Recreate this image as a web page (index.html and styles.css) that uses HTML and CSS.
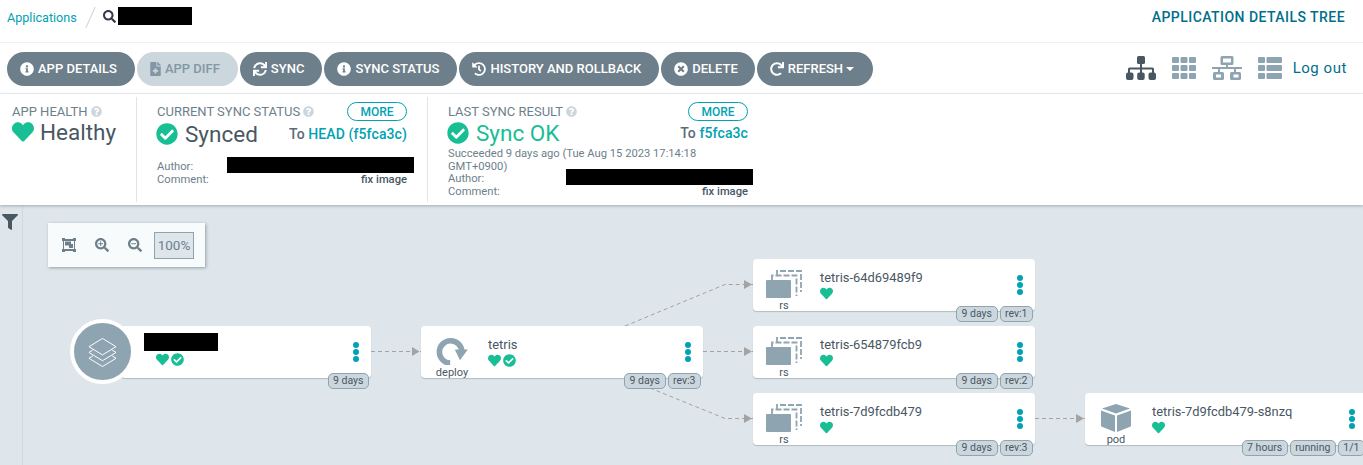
FILE: index.html
```html
<!DOCTYPE html>
<html lang="en">
<head>
  <meta charset="UTF-8">
  <meta name="viewport" content="width=device-width, initial-scale=1.0">
  <title>Application Details Tree</title>
  <link rel="stylesheet" href="styles.css">
</head>
<body>

  <svg class="sprite" xmlns="http://www.w3.org/2000/svg">
    <symbol id="i-info" viewBox="0 0 512 512"><path d="M256 8C119.043 8 8 119.083 8 256c0 136.997 111.043 248 248 248s248-111.003 248-248C504 119.083 392.957 8 256 8zm0 110c23.196 0 42 18.804 42 42s-18.804 42-42 42-42-18.804-42-42 18.804-42 42-42zm56 254c0 6.627-5.373 12-12 12h-88c-6.627 0-12-5.373-12-12v-24c0-6.627 5.373-12 12-12h12v-64h-12c-6.627 0-12-5.373-12-12v-24c0-6.627 5.373-12 12-12h64c6.627 0 12 5.373 12 12v100h12c6.627 0 12 5.373 12 12v24z"/></symbol>
    <symbol id="i-check" viewBox="0 0 512 512"><path d="M504 256c0 136.967-111.033 248-248 248S8 392.967 8 256 119.033 8 256 8s248 111.033 248 248zM227.314 387.314l184-184c6.248-6.248 6.248-16.379 0-22.627l-22.627-22.627c-6.248-6.249-16.379-6.249-22.628 0L216 308.118l-70.059-70.059c-6.248-6.248-16.379-6.248-22.628 0l-22.627 22.627c-6.248 6.248-6.248 16.379 0 22.627l104 104c6.249 6.249 16.379 6.249 22.628.001z"/></symbol>
    <symbol id="i-heart" viewBox="0 0 512 512"><path d="M462.3 62.6C407.5 15.9 326 24.3 275.7 76.2L256 96.5l-19.7-20.3C186.1 24.3 104.5 15.9 49.7 62.6c-62.8 53.6-66.1 149.8-9.9 207.9l193.5 199.8c12.5 12.9 32.8 12.9 45.3 0l193.5-199.8c56.3-58.1 53-154.3-9.8-207.9z"/></symbol>
    <symbol id="i-search" viewBox="0 0 512 512"><path d="M505 442.7L405.3 343c-4.5-4.5-10.6-7-17-7H372c27.6-35.3 44-79.7 44-128C416 93.1 322.9 0 208 0S0 93.1 0 208s93.1 208 208 208c48.3 0 92.7-16.4 128-44v16.3c0 6.4 2.5 12.5 7 17l99.7 99.7c9.4 9.4 24.6 9.4 33.9 0l28.3-28.3c9.4-9.4 9.4-24.6.1-34zM208 336c-70.7 0-128-57.2-128-128 0-70.7 57.2-128 128-128 70.7 0 128 57.2 128 128 0 70.7-57.2 128-128 128z"/></symbol>
    <symbol id="i-sync" viewBox="0 0 512 512"><path d="M440.65 12.57l4 82.77A247.16 247.16 0 0 0 255.83 8C134.73 8 33.91 94.92 12.29 209.82A12 12 0 0 0 24.09 224h49.05a12 12 0 0 0 11.67-9.26 175.91 175.91 0 0 1 317-56.94l-101.46-4.86a12 12 0 0 0-12.57 12v47.41a12 12 0 0 0 12 12H500a12 12 0 0 0 12-12V12a12 12 0 0 0-12-12h-47.37a12 12 0 0 0-11.98 12.57zM255.83 432a175.61 175.61 0 0 1-146-77.8l101.8 4.87a12 12 0 0 0 12.57-12v-47.4a12 12 0 0 0-12-12H12a12 12 0 0 0-12 12V500a12 12 0 0 0 12 12h47.35a12 12 0 0 0 12-12.6l-4.15-82.57A247.17 247.17 0 0 0 255.83 504c121.11 0 221.93-86.92 243.55-201.82a12 12 0 0 0-11.8-14.18h-49.05a12 12 0 0 0-11.67 9.26A175.86 175.86 0 0 1 255.83 432z"/></symbol>
    <symbol id="i-redo" viewBox="0 0 512 512"><path d="M500.33 0h-47.41a12 12 0 0 0-12 12.57l4 82.76A247.42 247.42 0 0 0 256 8C119.34 8 7.9 119.53 8 256.19 8.1 393.07 119.1 504 256 504a247.1 247.1 0 0 0 166.18-63.91 12 12 0 0 0 .48-17.43l-34-34a12 12 0 0 0-16.38-.55A176 176 0 1 1 402.1 157.8l-101.53-4.87a12 12 0 0 0-12.57 12v47.41a12 12 0 0 0 12 12h200.33a12 12 0 0 0 12-12V12a12 12 0 0 0-12-12z"/></symbol>
    <symbol id="i-history" viewBox="0 0 512 512"><path d="M504 255.531c.253 136.64-111.18 248.372-247.82 248.468-59.015.042-113.223-20.53-155.822-54.911-11.077-8.94-11.905-25.541-1.839-35.607l11.267-11.267c8.609-8.609 22.353-9.551 31.891-1.984C173.062 425.135 212.781 440 256 440c101.705 0 184-82.311 184-184 0-101.705-82.311-184-184-184-48.814 0-93.149 18.969-126.068 49.932l50.754 50.754c10.08 10.08 2.941 27.314-11.313 27.314H24c-8.837 0-16-7.163-16-16V38.627c0-14.254 17.234-21.393 27.314-11.314l49.372 49.372C129.209 34.136 189.552 8 256 8c136.81 0 247.747 110.78 248 247.531zm-180.912 78.784l9.823-12.63c8.138-10.463 6.253-25.542-4.21-33.679L288 256.349V152c0-13.255-10.745-24-24-24h-16c-13.255 0-24 10.745-24 24v135.651l65.409 50.874c10.463 8.137 25.541 6.253 33.679-4.21z"/></symbol>
    <symbol id="i-times" viewBox="0 0 512 512"><path d="M256 8C119 8 8 119 8 256s111 248 248 248 248-111 248-248S393 8 256 8zm121.6 313.1c4.7 4.7 4.7 12.3 0 17L338 377.6c-4.7 4.7-12.3 4.7-17 0L256 312l-65.1 65.6c-4.7 4.7-12.3 4.7-17 0L134.4 338c-4.7-4.7-4.7-12.3 0-17l65.6-65-65.6-65.1c-4.7-4.7-4.7-12.3 0-17l39.6-39.6c4.7-4.7 12.3-4.7 17 0l65 65.7 65.1-65.6c4.7-4.7 12.3-4.7 17 0l39.6 39.6c4.7 4.7 4.7 12.3 0 17L312 256l65.6 65.1z"/></symbol>
    <symbol id="i-question" viewBox="0 0 512 512"><path d="M504 256c0 136.997-111.043 248-248 248S8 392.997 8 256C8 119.083 119.043 8 256 8s248 111.083 248 248zM262.655 90c-54.497 0-89.255 22.957-116.549 63.758-3.536 5.286-2.353 12.415 2.715 16.258l34.699 26.31c5.205 3.947 12.621 3.008 16.665-2.122 17.864-22.658 30.113-35.797 57.303-35.797 20.429 0 45.698 13.148 45.698 32.958 0 14.976-12.363 22.667-32.534 33.976C247.128 238.528 216 254.941 216 296v4c0 6.627 5.373 12 12 12h56c6.627 0 12-5.373 12-12v-1.333c0-28.462 83.186-29.647 83.186-106.667 0-58.002-60.165-102-116.531-102zM256 338c-25.365 0-46 20.635-46 46 0 25.364 20.635 46 46 46s46-20.636 46-46c0-25.365-20.635-46-46-46z"/></symbol>
    <symbol id="i-filter" viewBox="0 0 512 512"><path d="M487.976 0H24.028C2.71 0-8.047 25.866 7.058 40.971L192 225.941V432c0 7.831 3.821 15.17 10.237 19.662l80 55.98C298.02 518.69 320 507.493 320 487.98V225.941l184.947-184.97C520.021 25.896 509.338 0 487.976 0z"/></symbol>
    <symbol id="i-file" viewBox="0 0 384 512"><path d="M377 105L279.1 7c-4.5-4.5-10.6-7-17-7H256v128h128v-6.1c0-6.3-2.5-12.4-7-16.9zm-153 31V0H24C10.7 0 0 10.7 0 24v464c0 13.3 10.7 24 24 24h336c13.3 0 24-10.7 24-24V160H248c-13.2 0-24-10.8-24-24zm64 160v48c0 4.4-3.6 8-8 8h-56v56c0 4.4-3.6 8-8 8h-48c-4.4 0-8-3.6-8-8v-56h-56c-4.4 0-8-3.6-8-8v-48c0-4.4 3.6-8 8-8h56v-56c0-4.4 3.6-8 8-8h48c4.4 0 8 3.6 8 8v56h56c4.4 0 8 3.6 8 8z"/></symbol>
    <symbol id="i-tree" viewBox="0 0 30 24"><rect x="11" y="0" width="8" height="8" rx="1.5"/><path d="M14 8h2v3.5h10.5a1.5 1.5 0 0 1 1.5 1.5v4h-2v-3.5H16V17h-2v-3.5H4V17H2v-4a1.5 1.5 0 0 1 1.5-1.5H14z"/><rect x="0" y="16.5" width="7.5" height="7.5" rx="2"/><rect x="11.2" y="16.5" width="7.5" height="7.5" rx="2"/><rect x="22.5" y="16.5" width="7.5" height="7.5" rx="2"/></symbol>
    <symbol id="i-grid" viewBox="0 0 24 22"><rect x="0" y="0" width="7" height="6" rx="1"/><rect x="8.5" y="0" width="7" height="6" rx="1"/><rect x="17" y="0" width="7" height="6" rx="1"/><rect x="0" y="8" width="7" height="6" rx="1"/><rect x="8.5" y="8" width="7" height="6" rx="1"/><rect x="17" y="8" width="7" height="6" rx="1"/><rect x="0" y="16" width="7" height="6" rx="1"/><rect x="8.5" y="16" width="7" height="6" rx="1"/><rect x="17" y="16" width="7" height="6" rx="1"/></symbol>
    <symbol id="i-network" viewBox="0 0 30 24"><path fill-rule="evenodd" d="M10 0h10a1.5 1.5 0 0 1 1.5 1.500v6A1.500 1.500 0 0 1 20 9h-4v2h14v2h-6v3h3.500A1.500 1.500 0 0 1 29 17.500v5a1.500 1.500 0 0 1-1.500 1.500h-8a1.500 1.500 0 0 1-1.500-1.500v-5a1.500 1.500 0 0 1 1.500-1.500H22v-3H8v3h2.500a1.500 1.500 0 0 1 1.500 1.500v5a1.500 1.500 0 0 1-1.500 1.500h-8A1.500 1.500 0 0 1 1 22.500v-5A1.500 1.500 0 0 1 2.500 16H6v-3H0v-2h14V9h-4a1.500 1.500 0 0 1-1.500-1.500v-6A1.500 1.500 0 0 1 10 0zm1 2.500v4h8v-4zM4 18.500v3h5v-3zm17.500 0v3h5v-3z"/></symbol>
    <symbol id="i-list" viewBox="0 0 24 22"><rect x="0" y="0" width="7" height="6" rx="1"/><rect x="8.500" y="0" width="15.500" height="6" rx="1"/><rect x="0" y="8" width="7" height="6" rx="1"/><rect x="8.500" y="8" width="15.500" height="6" rx="1"/><rect x="0" y="16" width="7" height="6" rx="1"/><rect x="8.500" y="16" width="15.500" height="6" rx="1"/></symbol>
    <symbol id="i-rs" viewBox="0 0 36 29"><g fill="none" stroke-width="1.800" stroke-dasharray="6 2"><path d="M11 7V2H35V23"/><path d="M6 11V6.500H30.500V27"/></g><rect class="rs-front" x="0" y="11" width="25" height="18" rx="1"/></symbol>
  </svg>

  <header class="top-bar">
    <a class="crumb" href="#">Applications</a>
    <span class="crumb-slash"></span>
    <svg class="icon search-icon"><use href="#i-search"/></svg>
    <span class="redacted redacted-title"></span>
    <span class="page-title">APPLICATION DETAILS TREE</span>
  </header>

  <nav class="toolbar">
    <button class="pill"><svg class="icon"><use href="#i-info"/></svg>APP DETAILS</button>
    <button class="pill disabled"><svg class="icon file-icon"><use href="#i-file"/></svg>APP DIFF</button>
    <button class="pill"><svg class="icon"><use href="#i-sync"/></svg>SYNC</button>
    <button class="pill"><svg class="icon"><use href="#i-info"/></svg>SYNC STATUS</button>
    <button class="pill"><svg class="icon"><use href="#i-history"/></svg>HISTORY AND ROLLBACK</button>
    <button class="pill pill-delete"><svg class="icon"><use href="#i-times"/></svg>DELETE</button>
    <button class="pill pill-refresh"><svg class="icon"><use href="#i-redo"/></svg>REFRESH<span class="caret"></span></button>
    <div class="view-switch">
      <svg class="view view-active"><use href="#i-tree"/></svg>
      <svg class="view view-small"><use href="#i-grid"/></svg>
      <svg class="view"><use href="#i-network"/></svg>
      <svg class="view view-small"><use href="#i-list"/></svg>
      <a class="logout" href="#">Log out</a>
    </div>
  </nav>

  <section class="status">
    <div class="panel panel-health">
      <div class="panel-title">APP HEALTH <svg class="icon help"><use href="#i-question"/></svg></div>
      <div class="health-value">
        <svg class="icon big-icon health-heart"><use href="#i-heart"/></svg>
        <span class="big-text">Healthy</span>
      </div>
    </div>

    <div class="panel panel-sync">
      <div class="panel-head">
        <div class="panel-title">CURRENT SYNC STATUS <svg class="icon help"><use href="#i-question"/></svg></div>
        <button class="more">MORE</button>
      </div>
      <div class="value-row">
        <div class="value">
          <svg class="icon big-icon"><use href="#i-check"/></svg>
          <span class="big-text">Synced</span>
        </div>
        <div class="target">To <a href="#">HEAD (f5fca3c)</a></div>
      </div>
      <div class="meta meta-current">
        <div class="meta-row"><span>Author:</span><span class="redacted redacted-author"></span></div>
        <div class="meta-row"><span>Comment:</span><b>fix image</b></div>
      </div>
    </div>

    <div class="panel panel-result">
      <div class="panel-head">
        <div class="panel-title">LAST SYNC RESULT <svg class="icon help"><use href="#i-question"/></svg></div>
        <button class="more">MORE</button>
      </div>
      <div class="value-row value-row-result">
        <div class="value">
          <svg class="icon big-icon"><use href="#i-check"/></svg>
          <span class="big-text ok">Sync OK</span>
        </div>
        <div class="target">To <a href="#">f5fca3c</a></div>
      </div>
      <div class="meta">
        <div class="meta-note">Succeeded 9 days ago (Tue Aug 15 2023 17:14:18 GMT+0900)</div>
        <div class="meta-row"><span>Author:</span><span class="redacted redacted-author redacted-last"></span></div>
        <div class="meta-row"><span>Comment:</span><b>fix image</b></div>
      </div>
    </div>
  </section>

  <main class="workspace">
    <aside class="filter-rail">
      <svg class="icon filter-icon"><use href="#i-filter"/></svg>
    </aside>

    <div class="graph">
      <div class="zoom-box">
        <svg class="zoom-icon" viewBox="0 0 14 14">
          <path d="M0 0h3v1h8V0h3v3h-1v8h1v3h-3v-1H3v1H0v-3h1V3H0zm2 3v8h10V3z"/>
          <rect x="3" y="3.500" width="6" height="4"/>
          <rect x="7" y="6" width="4" height="4"/>
        </svg>
        <svg class="zoom-icon" viewBox="0 0 512 512">
          <use href="#i-search"/>
          <path d="M190 120h36v70h70v36h-70v70h-36v-70h-70v-36h70z"/>
        </svg>
        <svg class="zoom-icon" viewBox="0 0 512 512">
          <use href="#i-search"/>
          <path d="M120 190h176v36H120z"/>
        </svg>
        <span class="zoom-level">100%</span>
      </div>

      <svg class="edges" width="1340" height="260">
        <g class="edge-lines">
          <path d="M348 146.500H398"/>
          <path d="M680 146.500H730"/>
          <path d="M602 121L702 79.500H730"/>
          <path d="M627 183L702 213.500H730"/>
          <path d="M1012 213.500H1062"/>
        </g>
        <g class="edge-heads">
          <path d="M389 142L396.500 146.500L389 151z"/>
          <path d="M721 142L729 146.500L721 151z"/>
          <path d="M721 75L729 79.500L721 84z"/>
          <path d="M721 209L729 213.500L721 218z"/>
          <path d="M1053 209L1061 213.500L1053 218z"/>
        </g>
      </svg>

      <div class="node node-app">
        <div class="app-badge">
          <svg class="layers" viewBox="0 0 30 30">
            <path d="M15 1L29 9.500L15 18L1 9.500z"/>
            <path d="M5 13L1 15.500L15 24L29 15.500L25 13"/>
            <path d="M5 19L1 21.500L15 30L29 21.500L25 19"/>
          </svg>
        </div>
        <div class="node-body">
          <span class="redacted redacted-node"></span>
          <div class="node-status">
            <svg class="icon mini"><use href="#i-heart"/></svg>
            <svg class="icon mini"><use href="#i-check"/></svg>
          </div>
        </div>
        <span class="dots"><i></i><i></i><i></i></span>
        <div class="tags"><span>9 days</span></div>
      </div>

      <div class="node node-deploy">
        <div class="kind">
          <svg class="kind-icon deploy-icon" viewBox="0 0 34 30">
            <path class="deploy-arc" d="M15 28A12 12 0 1 1 27.500 16"/>
            <path class="deploy-head" d="M20 13.500H34L25.500 25z"/>
          </svg>
          <span>deploy</span>
        </div>
        <div class="node-body">
          <div class="node-name">tetris</div>
          <div class="node-status">
            <svg class="icon mini"><use href="#i-heart"/></svg>
            <svg class="icon mini"><use href="#i-check"/></svg>
          </div>
        </div>
        <span class="dots"><i></i><i></i><i></i></span>
        <div class="tags"><span>9 days</span><span>rev:3</span></div>
      </div>

      <div class="node node-rs1">
        <div class="kind">
          <svg class="kind-icon rs-icon"><use href="#i-rs"/></svg>
          <span>rs</span>
        </div>
        <div class="node-body">
          <div class="node-name">tetris-64d69489f9</div>
          <div class="node-status"><svg class="icon mini"><use href="#i-heart"/></svg></div>
        </div>
        <span class="dots"><i></i><i></i><i></i></span>
        <div class="tags"><span>9 days</span><span>rev:1</span></div>
      </div>

      <div class="node node-rs2">
        <div class="kind">
          <svg class="kind-icon rs-icon"><use href="#i-rs"/></svg>
          <span>rs</span>
        </div>
        <div class="node-body">
          <div class="node-name">tetris-654879fcb9</div>
          <div class="node-status"><svg class="icon mini"><use href="#i-heart"/></svg></div>
        </div>
        <span class="dots"><i></i><i></i><i></i></span>
        <div class="tags"><span>9 days</span><span>rev:2</span></div>
      </div>

      <div class="node node-rs3">
        <div class="kind">
          <svg class="kind-icon rs-icon"><use href="#i-rs"/></svg>
          <span>rs</span>
        </div>
        <div class="node-body">
          <div class="node-name">tetris-7d9fcdb479</div>
          <div class="node-status"><svg class="icon mini"><use href="#i-heart"/></svg></div>
        </div>
        <span class="dots"><i></i><i></i><i></i></span>
        <div class="tags"><span>9 days</span><span>rev:3</span></div>
      </div>

      <div class="node node-pod">
        <div class="kind">
          <svg class="kind-icon" viewBox="0 0 30 28">
            <path d="M15 0L29 4.500L15 9.500L1 4.500z"/>
            <path d="M0 6.500L14 11.500V28L1.500 23a2 2 0 0 1-1.500-2z"/>
            <path d="M30 6.500L16 11.500V28L28.500 23a2 2 0 0 0 1.500-2z"/>
          </svg>
          <span>pod</span>
        </div>
        <div class="node-body">
          <div class="node-name">tetris-7d9fcdb479-s8nzq</div>
          <div class="node-status"><svg class="icon mini"><use href="#i-heart"/></svg></div>
        </div>
        <span class="dots"><i></i><i></i><i></i></span>
        <div class="tags"><span>7 hours</span><span>running</span><span>1/1</span></div>
      </div>
    </div>
  </main>

</body>
</html>
```

FILE: styles.css
```css
html, body {
  height: 465px;
  overflow: hidden;
}
body {
  margin: 0;
  background: #fff;
  color: #495763;
  font-family: Roboto, 'Open Sans', sans-serif;
  font-size: 13px;
  display: flex;
  flex-direction: column;
}
a {
  text-decoration: none;
}
button {
  font-family: inherit;
}
.sprite {
  display: none;
}
.icon {
  width: 14px;
  height: 14px;
  fill: currentColor;
  flex: none;
}
.redacted {
  display: block;
  background: #000;
}

/* top bar */
.top-bar {
  height: 43px;
  box-sizing: border-box;
  flex: none;
  display: flex;
  align-items: flex-start;
  padding-left: 7px;
  border-bottom: 1px solid #eff2f4;
}
.crumb {
  color: #00a2b3;
  font-size: 12.6px;
  line-height: 35px;
}
.crumb-slash {
  width: 1px;
  height: 23px;
  margin: 6px 0 0 13px;
  background: #ccd6dd;
  transform: rotate(24deg);
}
.search-icon {
  margin: 10px 2px 0 12px;
  width: 13px;
  height: 13px;
  color: #363c4a;
}
.redacted-title {
  width: 74px;
  height: 18px;
  margin-top: 7px;
}
.page-title {
  margin-left: auto;
  margin-right: 18px;
  color: #006f8a;
  font-size: 14px;
  font-weight: 500;
  line-height: 35px;
  letter-spacing: 0.45px;
}

/* toolbar */
.toolbar {
  height: 51px;
  box-sizing: border-box;
  flex: none;
  display: flex;
  align-items: center;
  gap: 2px;
  padding: 2px 16px 0 7px;
  border-bottom: 1px solid #eff2f4;
}
.pill {
  height: 34px;
  display: flex;
  align-items: center;
  gap: 4px;
  padding: 0 18px 1px 13px;
  border: none;
  border-radius: 17px;
  background: #6d7f8b;
  color: #fff;
  font-size: 13px;
  font-weight: 500;
}
.pill.disabled {
  background: #ccd6dd;
  color: #8197a5;
}
.pill-delete {
  padding-right: 17px;
}
.pill-refresh {
  padding-right: 19px;
}
.file-icon {
  width: 11px;
}
.caret {
  width: 0;
  height: 0;
  margin-left: -1px;
  border: 4px solid transparent;
  border-top: 4px solid #fff;
  border-bottom: none;
}
.view-switch {
  margin-left: auto;
  margin-top: -2px;
  display: flex;
  align-items: center;
  gap: 16px;
}
.view {
  width: 30px;
  height: 24px;
  fill: #8fa4b1;
}
.view-active {
  fill: #495763;
}
.view-small {
  width: 24px;
  height: 22px;
}
.logout {
  margin-left: -5px;
  color: #006f8a;
  font-size: 15px;
  letter-spacing: 0.55px;
}

/* status panels */
.status {
  height: 111px;
  box-sizing: border-box;
  flex: none;
  display: flex;
  padding-top: 3px;
  position: relative;
  box-shadow: 0 1px 3px rgba(73, 87, 99, 0.4);
}
.panel {
  height: 105px;
  box-sizing: border-box;
  padding: 5px 20px 0;
  border-right: 1px solid #dee6eb;
}
.panel-health {
  width: 137px;
  padding-left: 12px;
  padding-right: 0;
}
.panel-sync {
  width: 291px;
}
.panel-result {
  width: 320px;
  padding-right: 0;
  border-right: none;
}
.panel-head,
.value-row,
.meta-row {
  display: flex;
  justify-content: space-between;
}
.panel-title {
  display: flex;
  align-items: center;
  gap: 3px;
  height: 19px;
  color: #6d7f8b;
  font-size: 13px;
  white-space: nowrap;
}
.help {
  width: 11px;
  height: 11px;
  color: #ccd6dd;
}
.more {
  width: 60px;
  height: 19px;
  padding: 0;
  border: 1px solid #00a2b3;
  border-radius: 10px;
  background: #fff;
  color: #00a2b3;
  font-size: 12px;
  font-weight: 500;
}
.big-icon {
  width: 22px;
  height: 22px;
  color: #18be94;
}
.big-text {
  font-size: 22.5px;
  line-height: 28px;
  color: #495763;
}
.big-text.ok {
  color: #18be94;
}
.health-value,
.value {
  display: flex;
  align-items: center;
  gap: 6px;
}
.value .big-icon {
  margin-left: -1px;
  margin-right: 1px;
}
.health-value {
  margin-top: -3px;
}
.value-row {
  align-items: center;
  height: 26px;
}
.value-row-result {
  height: 23px;
  margin-bottom: 3px;
}
.target {
  color: #5c6b76;
  font-size: 14px;
  font-weight: 500;
  letter-spacing: 0.1px;
}
.target a {
  color: #00a2b3;
}
.meta {
  font-size: 11.2px;
  line-height: 13px;
  color: #6d7f8b;
}
.meta-current {
  margin-top: 13px;
}
.meta-note {
  width: 270px;
  margin-bottom: -1px;
}
.meta-row b {
  font-weight: 500;
  color: #495763;
}
.redacted-author {
  width: 187px;
  height: 16px;
  margin: -3px -7px -3px 0;
  position: relative;
  z-index: 1;
}
.redacted-last {
  margin-right: -5px;
}

/* graph */
.workspace {
  flex: 1;
  display: flex;
  min-height: 0;
  background: #dee6eb;
}
.filter-rail {
  width: 22px;
  flex: none;
  border-right: 1px solid #d0d9de;
}
.filter-icon {
  display: block;
  width: 16px;
  height: 16px;
  margin: 9px 0 0 2px;
}
.graph {
  flex: 1;
  position: relative;
  overflow: hidden;
}
.zoom-box {
  position: absolute;
  left: 25px;
  top: 18px;
  width: 157px;
  height: 44px;
  box-sizing: border-box;
  display: flex;
  align-items: center;
  gap: 19px;
  padding-left: 14px;
  background: #f8fbfb;
  box-shadow: 1px 1px 3px rgba(73, 87, 99, 0.5);
}
.zoom-icon {
  width: 14px;
  height: 14px;
  flex: none;
  fill: #6d7f8b;
}
.zoom-level {
  width: 40px;
  height: 27px;
  margin-left: -7px;
  box-sizing: border-box;
  border: 1px solid #8fa4b1;
  background: #dee6eb;
  color: #6d7f8b;
  font-size: 13.5px;
  line-height: 25px;
  text-align: center;
}
.edges {
  position: absolute;
  left: 0;
  top: 0;
}
.edge-lines {
  fill: none;
  stroke: #a3a3a3;
  stroke-dasharray: 4 3;
}
.edge-heads {
  fill: #a3a3a3;
}

/* nodes sit on the graph canvas at their layout position */
.node {
  position: absolute;
  width: 282px;
  height: 52px;
  display: flex;
  background: #fff;
  border-radius: 4px;
  box-shadow: 0 1px 1px rgba(73, 87, 99, 0.3);
}
.node-app { left: 98px; top: 121px; width: 250px; }
.node-deploy { left: 398px; top: 121px; }
.node-rs1 { left: 730px; top: 54px; }
.node-rs2 { left: 730px; top: 121px; }
.node-rs3 { left: 730px; top: 188px; }
.node-pod { left: 1062px; top: 188px; }

.kind {
  width: 62px;
  flex: none;
  position: relative;
  font-size: 11px;
  color: #495763;
  text-align: center;
}
.kind span {
  position: absolute;
  left: 0;
  right: 0;
  top: 40px;
  line-height: 13px;
}
.kind-icon {
  position: absolute;
  left: 16px;
  top: 11px;
  width: 30px;
  height: 28px;
  fill: #8fa4b1;
}
.deploy-icon {
  left: 15px;
  width: 32px;
}
.rs-icon {
  left: 13px;
  top: 10px;
  width: 36px;
  height: 29px;
  stroke: #8fa4b1;
}
.rs-front {
  stroke: none;
}
.deploy-arc {
  fill: none;
  stroke: #8fa4b1;
  stroke-width: 6;
}
.node-body {
  margin-left: 5px;
  padding-top: 11px;
}
.node-name {
  font-size: 12.9px;
  line-height: 15px;
}
.node-status {
  display: flex;
  gap: 2px;
  height: 14px;
  margin-top: 2px;
  color: #18be94;
}
.mini {
  width: 13px;
  height: 13px;
}
.dots {
  position: absolute;
  left: 264px;
  top: 16px;
  display: flex;
  flex-direction: column;
  gap: 1px;
}
.dots i {
  display: block;
  width: 6px;
  height: 6px;
  border-radius: 50%;
  background: #00a2b3;
}
.tags {
  position: absolute;
  right: 2px;
  top: 47px;
  display: flex;
  gap: 2px;
}
.tags span {
  height: 14px;
  padding: 0 4.5px;
  border: 1px solid #8fa4b1;
  border-radius: 5px;
  background: #ccd6dd;
  color: #495763;
  font-size: 10.5px;
  line-height: 14px;
  white-space: nowrap;
}

/* the first node has a round badge over its left end */
.node-app .node-body {
  margin-left: 9px;
  padding-top: 7px;
}
.node-app .node-status {
  margin: 2px 0 0 12px;
}
.node-app .dots {
  left: 232px;
}
.redacted-node {
  width: 74px;
  height: 18px;
}
.app-badge {
  width: 57px;
  height: 57px;
  flex: none;
  margin: -7px 0 0 -51px;
  display: flex;
  align-items: center;
  justify-content: center;
  border: 4px solid #fff;
  border-radius: 50%;
  background: #8fa4b1;
}
.layers {
  width: 29px;
  height: 30px;
  fill: none;
  stroke: #fff;
  stroke-width: 1;
}
```
